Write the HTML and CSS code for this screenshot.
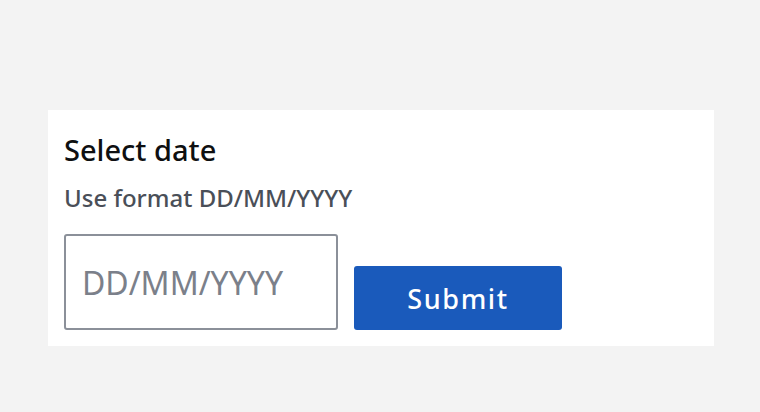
FILE: index.html
```html
<!DOCTYPE html>
<html lang="en">
<head>
  <meta charset="UTF-8" />
  <title>Select date</title>
  <link rel="stylesheet" href="styles.css">
</head>
<body>

<!-- Date form -->
<form class="date-card">
  <h2 class="date-title">Select date</h2>
  <label class="date-hint" for="date">Use format DD/MM/YYYY</label>
  <div class="date-row">
    <input class="date-input" id="date" type="text" placeholder="DD/MM/YYYY">
    <button class="date-submit" type="button">Submit</button>
  </div>
</form>

</body>
</html>
```

FILE: styles.css
```css
* {
  box-sizing: border-box;
  margin: 0;
  padding: 0;
}

body {
  font-family: "Noto Sans", "Open Sans", sans-serif;
  background: #f3f3f3;
  color: #111;
  padding: 110px 46px 0 48px;
}

.date-card {
  background: #fff;
  width: 666px;
  padding: 21px 16px 16px;
  display: flex;
  flex-direction: column;
}

.date-title {
  font-size: 29px;
  font-weight: 500;
  line-height: 38px;
  color: #0e0f11;
}

.date-hint {
  font-size: 24px;
  font-weight: 500;
  line-height: 32px;
  color: #4a4f58;
  margin-top: 13px;
}

.date-row {
  display: flex;
  align-items: flex-end;
  gap: 16px;
  margin-top: 20px;
}

.date-input {
  width: 274px;
  height: 96px;
  border: 2px solid #8b9099;
  border-radius: 3px;
  padding: 0 16px;
  font-family: inherit;
  font-size: 32px;
  color: #111;
  outline: none;
}

.date-input::placeholder {
  color: #7b808a;
}

.date-submit {
  width: 208px;
  height: 64px;
  border: none;
  border-radius: 3px;
  background: #1a5abb;
  color: #fff;
  font-family: inherit;
  font-size: 27px;
  font-weight: 500;
  letter-spacing: 1.6px;
  cursor: pointer;
}
```
